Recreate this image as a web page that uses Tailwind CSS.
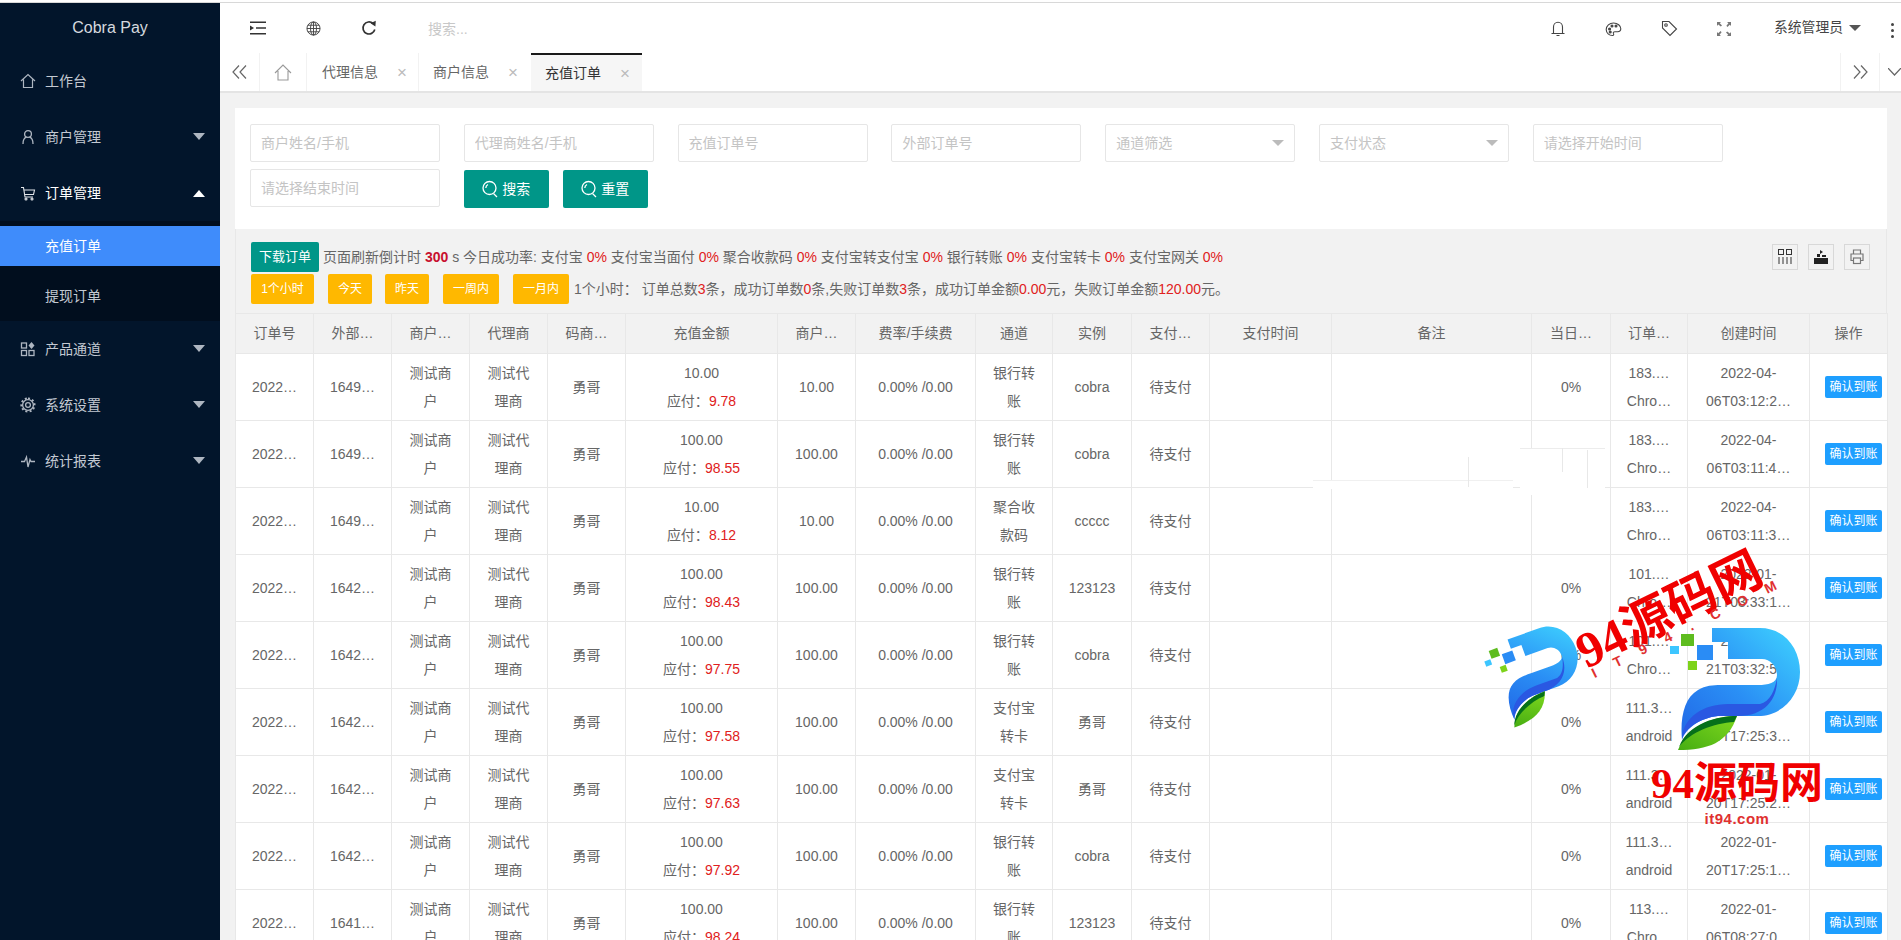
<!DOCTYPE html>
<html lang="zh-CN">
<head>
<meta charset="utf-8">
<title>Cobra Pay</title>
<script src="https://cdn.jsdelivr.net/npm/@tailwindcss/browser@4"></script>
</head>
<body class="m-0 bg-[#f2f2f2] font-['Liberation_Sans','Noto_Sans_CJK_SC',sans-serif] text-[14px] text-[#666]">
<svg width="0" height="0" class="absolute">
  <defs>
    <linearGradient id="pb" x1="1" y1="0" x2="0" y2="1"><stop offset="0" stop-color="#3fd4ff"/><stop offset="0.55" stop-color="#2a8ff5"/><stop offset="1" stop-color="#2167e6"/></linearGradient>
    <linearGradient id="pg" x1="1" y1="0" x2="0" y2="1"><stop offset="0" stop-color="#7ed81e"/><stop offset="1" stop-color="#46ad12"/></linearGradient>
    <symbol id="plogo" viewBox="-10 0 132 122" overflow="visible">
      <path fill="url(#pb)" d="M34 0H82C106 0 122 20 122 44C122 68 104 88 80 88H40C22 90 8 100 4 112C2 90 6 70 20 62C30 56 40 57 50 57H80C90 57 99 55 99 47C99 38 92 31 84 31H50V14H34Z"/>
      <path fill="#2a58e2" d="M60 88H40C22 90 8 100 4 110C5 90 25 76 50 76H82C92 74 97 62 99 50C100 72 86 88 60 88Z"/>
      <path fill="url(#pg)" d="M59 88C40 88 10 95 0 122C30 122 50 115 59 88Z"/>
      <path fill="#06701a" d="M59 88C40 88 10 95 1 119C12 104 36 95 56 94Z"/>
      <rect x="19" y="17" width="16" height="15" fill="#2a8cf5"/>
      <rect x="3" y="6" width="13" height="12" fill="#5ebc1f"/>
      <rect x="-8" y="18" width="9" height="8" fill="#3dc6ff"/>
      <rect x="10" y="33" width="9" height="9" fill="#7dd31a"/>
    </symbol>
  </defs>
</svg>

<div class="relative w-[1901px] h-[940px] overflow-hidden">
  <div class="h-[3px] bg-white border-b border-[#d8d8d8]"></div>
  <div class="flex h-[937px]">

    <!-- sidebar -->
    <aside class="w-[220px] shrink-0 bg-[#02152b] text-[#c3c9d2]">
      <div class="h-[50px] flex items-center justify-center text-[16px] text-[#d5d9df]">Cobra Pay</div>
      <div class="h-[56px] flex items-center pl-[20px]">
        <svg class="w-[16px] h-[16px] mr-[9px]" viewBox="0 0 16 16" fill="none" stroke="#aeb6c1" stroke-width="1.2"><path d="M1 8 8 1.5 15 8M3.5 6.5V14.5H12.5V6.5"/></svg>工作台
      </div>
      <div class="h-[56px] flex items-center pl-[20px] relative">
        <svg class="w-[16px] h-[16px] mr-[9px]" viewBox="0 0 16 16" fill="none" stroke="#aeb6c1" stroke-width="1.3"><circle cx="8" cy="5" r="3.4"/><path d="M3 15C3 11 5 8.6 6.5 8.2M13 15C13 11 11 8.6 9.5 8.2"/></svg>商户管理
        <span class="absolute left-[193px] top-[24px] w-0 h-0 border-x-[6px] border-x-transparent border-t-[7px] border-t-[#aeb6c1]"></span>
      </div>
      <div class="h-[56px] flex items-center pl-[20px] relative text-white">
        <svg class="w-[16px] h-[16px] mr-[9px]" viewBox="0 0 16 16" fill="none" stroke="#e2e5ea" stroke-width="1.1"><path d="M1 2.5H3.5L5 12H13M4 5H14.5L13.5 9.5H4.6"/><circle cx="6" cy="14" r="1"/><circle cx="12" cy="14" r="1"/></svg>订单管理
        <span class="absolute left-[193px] top-[25px] w-0 h-0 border-x-[6px] border-x-transparent border-b-[7px] border-b-white"></span>
      </div>
      <div class="h-[100px] bg-[#010e1e] pt-[5px]">
        <div class="h-[40px] bg-[#3f8cfb] flex items-center pl-[45px] text-white">充值订单</div>
        <div class="h-[50px] mt-[5px] flex items-center pl-[45px]">提现订单</div>
      </div>
      <div class="h-[56px] flex items-center pl-[20px] relative">
        <svg class="w-[16px] h-[16px] mr-[9px]" viewBox="0 0 16 16" fill="none" stroke="#aeb6c1" stroke-width="1.3"><rect x="1.5" y="2" width="5" height="5"/><rect x="1.5" y="9.5" width="5" height="5"/><rect x="9" y="9.5" width="5" height="5"/><path fill="#aeb6c1" stroke="none" d="M11.5 1 14.5 4.5 11.5 8 8.5 4.5Z"/></svg>产品通道
        <span class="absolute left-[193px] top-[24px] w-0 h-0 border-x-[6px] border-x-transparent border-t-[7px] border-t-[#aeb6c1]"></span>
      </div>
      <div class="h-[56px] flex items-center pl-[20px] relative">
        <svg class="w-[16px] h-[16px] mr-[9px]" viewBox="0 0 16 16" fill="none" stroke="#aeb6c1" stroke-width="1.3"><circle cx="8" cy="8" r="2.4"/><circle cx="8" cy="8" r="5.4"/><path stroke-width="2" stroke-dasharray="2 2.2" d="M8 1.4A6.6 6.6 0 1 1 7.9 1.4"/></svg>系统设置
        <span class="absolute left-[193px] top-[24px] w-0 h-0 border-x-[6px] border-x-transparent border-t-[7px] border-t-[#aeb6c1]"></span>
      </div>
      <div class="h-[56px] flex items-center pl-[20px] relative">
        <svg class="w-[16px] h-[16px] mr-[9px]" viewBox="0 0 16 16" fill="none" stroke="#aeb6c1" stroke-width="1.3"><path d="M1 8.5H4.5L6.5 4 8 14 10 6.5 11 8.5H15"/></svg>统计报表
        <span class="absolute left-[193px] top-[24px] w-0 h-0 border-x-[6px] border-x-transparent border-t-[7px] border-t-[#aeb6c1]"></span>
      </div>
    </aside>

    <main class="flex-1 min-w-0 flex flex-col">
      <!-- top bar -->
      <header class="h-[50px] bg-white flex items-center relative text-[#333]">
        <div class="flex items-center pl-[30px] gap-[40px]">
          <svg class="w-[16px] h-[16px]" viewBox="0 0 16 16" fill="none" stroke="#333" stroke-width="1.5"><path d="M0 2.2H16M6 8H16M0 13.8H16"/><path fill="#333" stroke="none" d="M0 5.5 4 8 0 10.5Z"/></svg>
          <svg class="w-[15px] h-[15px]" viewBox="0 0 16 16" fill="none" stroke="#444" stroke-width="1"><circle cx="8" cy="8" r="7"/><ellipse cx="8" cy="8" rx="3.2" ry="7"/><path d="M1 8H15M2 4.5H14M2 11.5H14M8 1V15"/></svg>
          <svg class="w-[16px] h-[16px]" viewBox="0 0 16 16" fill="none" stroke="#333" stroke-width="1.7"><path d="M13.8 9.5A6 6 0 1 1 12 3.5"/><path fill="#333" stroke="none" d="M9.5 3.2 14.8 0.8 14.4 6.6Z"/></svg>
        </div>
        <span class="absolute left-[208px] top-[17px] text-[#c8c8c8] leading-[18px]">搜索...</span>
        <div class="absolute left-[1330px] top-[17px] flex items-center gap-[39px]">
          <svg class="w-[16px] h-[17px]" viewBox="0 0 16 16" fill="none" stroke="#444" stroke-width="1.1"><path d="M3.5 13V6.5C3.5 3.8 5.5 1.8 8 1.8S12.5 3.8 12.5 6.5V13M1.5 13H14.5M6.5 15H9.5"/></svg>
          <svg class="w-[17px] h-[16px]" viewBox="0 0 17 16" fill="none" stroke="#444" stroke-width="1.1"><path d="M8.5 2C4.5 2 1.2 5 1.2 8.6C1.2 12 4.2 14.5 7.4 14.5C9 14.5 8.8 13.3 8.4 12.4C8 11.4 8.8 10.7 10 10.7H12.6C14.6 10.7 15.8 9.6 15.8 7.8C15.8 4.6 12.6 2 8.5 2Z"/><circle cx="4.6" cy="8" r="1" fill="#444"/><circle cx="7" cy="5" r="1" fill="#444"/><circle cx="11" cy="5" r="1" fill="#444"/><circle cx="5.2" cy="11" r="1" fill="#444"/></svg>
          <svg class="w-[17px] h-[17px]" viewBox="0 0 17 17" fill="none" stroke="#444" stroke-width="1.1"><path d="M1.5 1.5H8L15.5 9 9 15.5 1.5 8Z"/><circle cx="5" cy="5" r="1.3"/></svg>
          <svg class="w-[14px] h-[14px]" viewBox="0 0 14 14" fill="#777"><path d="M0 0H4L2.8 1.2 5 3.4 3.8 4.6 1.2 2.4 0 4ZM14 0V4L12.8 2.8 10.4 5 9.4 3.8 11.4 1.2 10 0ZM0 14V10L1.2 11.2 3.6 9 4.6 10.2 2.6 12.8 4 14ZM14 14H10L11.2 12.8 9 10.4 10.2 9.4 12.8 11.4 14 10Z"/></svg>
        </div>
        <span class="absolute left-[1554px] top-[16px] leading-[18px] text-[13.8px] text-[#444]">系统管理员</span>
        <span class="absolute left-[1629px] top-[22px] w-0 h-0 border-x-[6px] border-x-transparent border-t-[6px] border-t-[#555]"></span>
        <span class="absolute left-[1671px] top-[20px] flex flex-col gap-[3px]"><i class="block w-[3px] h-[3px] rounded-full bg-[#444]"></i><i class="block w-[3px] h-[3px] rounded-full bg-[#444]"></i><i class="block w-[3px] h-[3px] rounded-full bg-[#444]"></i></span>
      </header>

      <!-- tabs -->
      <nav class="h-[40px] bg-white border-b-2 border-[#e4e4e4] flex relative text-[#666] shrink-0">
        <div class="w-[40px] flex items-center justify-center border-r border-[#f2f2f2]">
          <svg class="w-[15px] h-[14px]" viewBox="0 0 15 14" fill="none" stroke="#666" stroke-width="1.2"><path d="M7 0.5 1 7 7 13.5M14 0.5 8 7 14 13.5"/></svg>
        </div>
        <div class="w-[47px] flex items-center justify-center border-r border-[#f2f2f2]">
          <svg class="w-[18px] h-[17px]" viewBox="0 0 18 17" fill="none" stroke="#999" stroke-width="1.1"><path d="M1 9 9 1 17 9M4 7V16H14V7"/></svg>
        </div>
        <div class="w-[112px] flex items-center pl-[15px] border-r border-[#f2f2f2]">代理信息<span class="ml-[19px] text-[#bbb] text-[17px] leading-[17px]">×</span></div>
        <div class="w-[112px] flex items-center pl-[14px]">商户信息<span class="ml-[19px] text-[#bbb] text-[17px] leading-[17px]">×</span></div>
        <div class="w-[111px] flex items-center pl-[14px] bg-[#f6f6f6] border-t-2 border-[#1a1a1a] text-[#333]">充值订单<span class="ml-[19px] text-[#bbb] text-[17px] leading-[17px]">×</span></div>
        <div class="absolute left-[1620px] top-0 h-full w-[40px] flex items-center justify-center border-x border-[#f2f2f2]">
          <svg class="w-[15px] h-[14px]" viewBox="0 0 15 14" fill="none" stroke="#666" stroke-width="1.2"><path d="M1 0.5 7 7 1 13.5M8 0.5 14 7 8 13.5"/></svg>
        </div>
        <svg class="absolute left-[1668px] top-[15px] w-[13px] h-[8px]" viewBox="0 0 13 8" fill="none" stroke="#666" stroke-width="1.2"><path d="M0 0 6.5 7 13 0"/></svg>
      </nav>

      <!-- content -->
      <section class="flex-1 min-h-0 pt-[15px] pl-[15px] pr-[14px] overflow-hidden">
        <div class="h-[121px] bg-white pl-[15px] pt-[16px] flex flex-wrap content-start gap-x-[23.8px] gap-y-[7px]">
          <input class="w-[190px] h-[38px] border border-[#e6e6e6] rounded-[2px] pl-[10px] placeholder:text-[#c4c4c4]" placeholder="商户姓名/手机">
          <input class="w-[190px] h-[38px] border border-[#e6e6e6] rounded-[2px] pl-[10px] placeholder:text-[#c4c4c4]" placeholder="代理商姓名/手机">
          <input class="w-[190px] h-[38px] border border-[#e6e6e6] rounded-[2px] pl-[10px] placeholder:text-[#c4c4c4]" placeholder="充值订单号">
          <input class="w-[190px] h-[38px] border border-[#e6e6e6] rounded-[2px] pl-[10px] placeholder:text-[#c4c4c4]" placeholder="外部订单号">
          <div class="w-[190px] h-[38px] border border-[#e6e6e6] rounded-[2px] pl-[10px] flex items-center justify-between pr-[10px] text-[#c4c4c4]">通道筛选<span class="w-0 h-0 border-x-[6px] border-x-transparent border-t-[6px] border-t-[#bbb]"></span></div>
          <div class="w-[190px] h-[38px] border border-[#e6e6e6] rounded-[2px] pl-[10px] flex items-center justify-between pr-[10px] text-[#c4c4c4]">支付状态<span class="w-0 h-0 border-x-[6px] border-x-transparent border-t-[6px] border-t-[#bbb]"></span></div>
          <input class="w-[190px] h-[38px] border border-[#e6e6e6] rounded-[2px] pl-[10px] placeholder:text-[#c4c4c4]" placeholder="请选择开始时间">
          <input class="w-[190px] h-[38px] border border-[#e6e6e6] rounded-[2px] pl-[10px] placeholder:text-[#c4c4c4]" placeholder="请选择结束时间">
          <div class="flex gap-[14px] mt-[1px]">
            <button class="w-[85px] h-[38px] bg-[#009688] rounded-[2px] text-white flex items-center justify-center gap-[3px]"><svg class="w-[17px] h-[18px]" viewBox="0 0 17 18" fill="none" stroke="#fff" stroke-width="1.3"><circle cx="7.5" cy="8" r="6.5"/><path d="M11.5 13.5 15 17M3.8 8A3.8 3.8 0 0 1 6 4.5"/></svg>搜索</button>
            <button class="w-[85px] h-[38px] bg-[#009688] rounded-[2px] text-white flex items-center justify-center gap-[3px]"><svg class="w-[17px] h-[18px]" viewBox="0 0 17 18" fill="none" stroke="#fff" stroke-width="1.3"><circle cx="7.5" cy="8" r="6.5"/><path d="M11.5 13.5 15 17M3.8 8A3.8 3.8 0 0 1 6 4.5"/></svg>重置</button>
          </div>
        </div>

        <div class="h-[84px] bg-[#f2f2f2] border-x border-[#e8e8e8] pl-[15px] pr-[16px] pt-[13px] flex justify-between">
          <div>
            <div class="flex items-center h-[30px]">
              <span class="w-[68px] h-[30px] bg-[#009688] rounded-[2px] text-white text-[13px] flex items-center justify-center mr-[4px]">下载订单</span>
              <span>页面刷新倒计时 <b class="text-[#c8102e]">300</b> s 今日成功率: 支付宝 <span class="text-[#e02020]">0%</span> 支付宝当面付 <span class="text-[#e02020]">0%</span> 聚合收款码 <span class="text-[#e02020]">0%</span> 支付宝转支付宝 <span class="text-[#e02020]">0%</span> 银行转账 <span class="text-[#e02020]">0%</span> 支付宝转卡 <span class="text-[#e02020]">0%</span> 支付宝网关 <span class="text-[#e02020]">0%</span></span>
            </div>
            <div class="flex items-center h-[30px] mt-[2px] text-white text-[12px]">
              <span class="w-[63px] h-[30px] bg-[#ffb800] rounded-[2px] flex items-center justify-center mr-[14px]">1个小时</span>
              <span class="w-[44px] h-[30px] bg-[#ffb800] rounded-[2px] flex items-center justify-center mr-[13px]">今天</span>
              <span class="w-[44px] h-[30px] bg-[#ffb800] rounded-[2px] flex items-center justify-center mr-[14px]">昨天</span>
              <span class="w-[56px] h-[30px] bg-[#ffb800] rounded-[2px] flex items-center justify-center mr-[14px]">一周内</span>
              <span class="w-[56px] h-[30px] bg-[#ffb800] rounded-[2px] flex items-center justify-center mr-[5px]">一月内</span>
              <span class="text-[14px] text-[#666]">1个小时： 订单总数<span class="text-[#e02020]">3</span>条，成功订单数<span class="text-[#e02020]">0</span>条,失败订单数<span class="text-[#e02020]">3</span>条，成功订单金额<span class="text-[#e02020]">0.00</span>元，失败订单金额<span class="text-[#e02020]">120.00</span>元。</span>
            </div>
          </div>
          <div class="flex gap-[10px] mt-[2px]">
            <span class="w-[26px] h-[26px] border border-[#d8d8d8] flex items-center justify-center"><svg class="w-[14px] h-[16px]" viewBox="0 0 14 16" fill="none" stroke="#333" stroke-width="1"><rect x="0.5" y="0.5" width="5" height="5"/><rect x="8.5" y="0.5" width="5" height="5"/><path d="M1 8V15M5 8V15M9 8V15M13 8V15"/></svg></span>
            <span class="w-[26px] h-[26px] border border-[#d8d8d8] flex items-center justify-center"><svg class="w-[14px] h-[16px]" viewBox="0 0 14 16" fill="#222"><path d="M0 9H14V15H0ZM3 8V5H6V1L9 3 6 5V8ZM8 6H12V8H8Z"/></svg></span>
            <span class="w-[26px] h-[26px] border border-[#d8d8d8] flex items-center justify-center"><svg class="w-[14px] h-[16px]" viewBox="0 0 14 16" fill="none" stroke="#777" stroke-width="1.2"><path d="M3.5 5V1H10.5V5M3.5 11.5H1V5H13V11.5H10.5"/><rect x="3.5" y="9" width="7" height="5.5"/></svg></span>
          </div>
        </div>

        <table class="w-[1652px] table-fixed border-collapse bg-white [&_td]:border [&_td]:border-[#e8e8e8] [&_td]:text-center [&_td]:leading-[28px] [&_td]:p-0 [&_th]:border [&_th]:border-[#e8e8e8] [&_th]:bg-[#f2f2f2] [&_th]:font-normal [&_th]:h-[40px] [&_th]:p-0 [&_tbody_tr]:h-[67px]">
          <colgroup>
            <col class="w-[78px]"><col class="w-[78px]"><col class="w-[78px]"><col class="w-[78px]"><col class="w-[78px]"><col class="w-[152px]"><col class="w-[78px]"><col class="w-[120px]"><col class="w-[77px]"><col class="w-[79px]"><col class="w-[78px]"><col class="w-[122px]"><col class="w-[200px]"><col class="w-[79px]"><col class="w-[77px]"><col class="w-[122px]"><col class="w-[78px]">
          </colgroup>
          <thead>
            <tr><th>订单号</th><th>外部…</th><th>商户…</th><th>代理商</th><th>码商…</th><th>充值金额</th><th>商户…</th><th>费率/手续费</th><th>通道</th><th>实例</th><th>支付…</th><th>支付时间</th><th>备注</th><th>当日…</th><th>订单…</th><th>创建时间</th><th>操作</th></tr>
          </thead>
          <tbody>
            <tr><td>2022…</td><td>1649…</td><td>测试商<br>户</td><td>测试代<br>理商</td><td>勇哥</td><td>10.00<br>应付：<span class="text-[#e02020]">9.78</span></td><td>10.00</td><td>0.00% /0.00</td><td>银行转<br>账</td><td>cobra</td><td>待支付</td><td></td><td></td><td>0%</td><td>183.…<br>Chro…</td><td>2022-04-<br>06T03:12:2…</td><td><span class="block w-[57px] h-[22px] leading-[22px] ml-[15px] bg-[#1e9fff] rounded-[2px] text-white text-[12px]">确认到账</span></td></tr>
            <tr><td>2022…</td><td>1649…</td><td>测试商<br>户</td><td>测试代<br>理商</td><td>勇哥</td><td>100.00<br>应付：<span class="text-[#e02020]">98.55</span></td><td>100.00</td><td>0.00% /0.00</td><td>银行转<br>账</td><td>cobra</td><td>待支付</td><td></td><td></td><td></td><td>183.…<br>Chro…</td><td>2022-04-<br>06T03:11:4…</td><td><span class="block w-[57px] h-[22px] leading-[22px] ml-[15px] bg-[#1e9fff] rounded-[2px] text-white text-[12px]">确认到账</span></td></tr>
            <tr><td>2022…</td><td>1649…</td><td>测试商<br>户</td><td>测试代<br>理商</td><td>勇哥</td><td>10.00<br>应付：<span class="text-[#e02020]">8.12</span></td><td>10.00</td><td>0.00% /0.00</td><td>聚合收<br>款码</td><td>ccccc</td><td>待支付</td><td></td><td></td><td></td><td>183.…<br>Chro…</td><td>2022-04-<br>06T03:11:3…</td><td><span class="block w-[57px] h-[22px] leading-[22px] ml-[15px] bg-[#1e9fff] rounded-[2px] text-white text-[12px]">确认到账</span></td></tr>
            <tr><td>2022…</td><td>1642…</td><td>测试商<br>户</td><td>测试代<br>理商</td><td>勇哥</td><td>100.00<br>应付：<span class="text-[#e02020]">98.43</span></td><td>100.00</td><td>0.00% /0.00</td><td>银行转<br>账</td><td>123123</td><td>待支付</td><td></td><td></td><td>0%</td><td>101.…<br>Chro…</td><td>2022-01-<br>21T03:33:1…</td><td><span class="block w-[57px] h-[22px] leading-[22px] ml-[15px] bg-[#1e9fff] rounded-[2px] text-white text-[12px]">确认到账</span></td></tr>
            <tr><td>2022…</td><td>1642…</td><td>测试商<br>户</td><td>测试代<br>理商</td><td>勇哥</td><td>100.00<br>应付：<span class="text-[#e02020]">97.75</span></td><td>100.00</td><td>0.00% /0.00</td><td>银行转<br>账</td><td>cobra</td><td>待支付</td><td></td><td></td><td>0%</td><td>101.…<br>Chro…</td><td>2022-01-<br>21T03:32:5…</td><td><span class="block w-[57px] h-[22px] leading-[22px] ml-[15px] bg-[#1e9fff] rounded-[2px] text-white text-[12px]">确认到账</span></td></tr>
            <tr><td>2022…</td><td>1642…</td><td>测试商<br>户</td><td>测试代<br>理商</td><td>勇哥</td><td>100.00<br>应付：<span class="text-[#e02020]">97.58</span></td><td>100.00</td><td>0.00% /0.00</td><td>支付宝<br>转卡</td><td>勇哥</td><td>待支付</td><td></td><td></td><td>0%</td><td>111.3…<br>android</td><td>2022-01-<br>20T17:25:3…</td><td><span class="block w-[57px] h-[22px] leading-[22px] ml-[15px] bg-[#1e9fff] rounded-[2px] text-white text-[12px]">确认到账</span></td></tr>
            <tr><td>2022…</td><td>1642…</td><td>测试商<br>户</td><td>测试代<br>理商</td><td>勇哥</td><td>100.00<br>应付：<span class="text-[#e02020]">97.63</span></td><td>100.00</td><td>0.00% /0.00</td><td>支付宝<br>转卡</td><td>勇哥</td><td>待支付</td><td></td><td></td><td>0%</td><td>111.3…<br>android</td><td>2022-01-<br>20T17:25:2…</td><td><span class="block w-[57px] h-[22px] leading-[22px] ml-[15px] bg-[#1e9fff] rounded-[2px] text-white text-[12px]">确认到账</span></td></tr>
            <tr><td>2022…</td><td>1642…</td><td>测试商<br>户</td><td>测试代<br>理商</td><td>勇哥</td><td>100.00<br>应付：<span class="text-[#e02020]">97.92</span></td><td>100.00</td><td>0.00% /0.00</td><td>银行转<br>账</td><td>cobra</td><td>待支付</td><td></td><td></td><td>0%</td><td>111.3…<br>android</td><td>2022-01-<br>20T17:25:1…</td><td><span class="block w-[57px] h-[22px] leading-[22px] ml-[15px] bg-[#1e9fff] rounded-[2px] text-white text-[12px]">确认到账</span></td></tr>
            <tr><td>2022…</td><td>1641…</td><td>测试商<br>户</td><td>测试代<br>理商</td><td>勇哥</td><td>100.00<br>应付：<span class="text-[#e02020]">98.24</span></td><td>100.00</td><td>0.00% /0.00</td><td>银行转<br>账</td><td>123123</td><td>待支付</td><td></td><td></td><td>0%</td><td>113.…<br>Chro…</td><td>2022-01-<br>06T08:27:0…</td><td><span class="block w-[57px] h-[22px] leading-[22px] ml-[15px] bg-[#1e9fff] rounded-[2px] text-white text-[12px]">确认到账</span></td></tr>
          </tbody>
        </table>
      </section>
    </main>
  </div>

  <!-- erased patch on the table (part of the picture) -->
  <div class="absolute left-[1313px] top-[480px] w-[200px] h-[9px] bg-white border-t border-[#f0f0f0]"></div>
  <div class="absolute left-[1520px] top-[448px] w-[85px] h-[47px] bg-white border-t border-[#ececec]"></div>
  <div class="absolute left-[1562px] top-[448px] w-px h-[24px] bg-[#e8e8e8]"></div>
  <div class="absolute left-[1587px] top-[450px] w-px h-[38px] bg-[#e8e8e8]"></div>
  <div class="absolute left-[1468px] top-[457px] w-px h-[30px] bg-[#e8e8e8]"></div>

  <!-- watermark -->
  <svg class="absolute left-[1678px] top-[628px] w-[133px] h-[122px] overflow-visible"><use href="#plogo" x="-10" width="132" height="122"/></svg>
  <svg class="absolute left-[1490px] top-[634px] w-[80px] h-[80px] overflow-visible rotate-[-20deg]"><use href="#plogo" x="0" width="92" height="85"/></svg>
  <div class="absolute left-[1559px] top-[580px] w-[220px] text-center rotate-[-26deg] text-[#f00000] text-[50px] leading-[60px] font-bold font-['Liberation_Serif','Noto_Sans_CJK_SC',serif]">94源码网</div>
  <div class="absolute left-[1582px] top-[620px] w-[204px] flex justify-between rotate-[-26deg] text-[#e03030] text-[14px] font-bold leading-[18px]"><span>I</span><span>T</span><span>9</span><span>4</span><span>.</span><span>C</span><span>O</span><span>M</span></div>
  <div class="absolute left-[1637px] top-[757px] w-[200px] text-center text-[#f00000] text-[43px] leading-[54px] font-bold font-['Liberation_Serif','Noto_Sans_CJK_SC',serif]">94源码网</div>
  <div class="absolute left-[1687px] top-[809px] w-[100px] text-center text-[#e03030] text-[15px] leading-[20px] font-bold tracking-[0.5px]">it94.com</div>
</div>
</body>
</html>
